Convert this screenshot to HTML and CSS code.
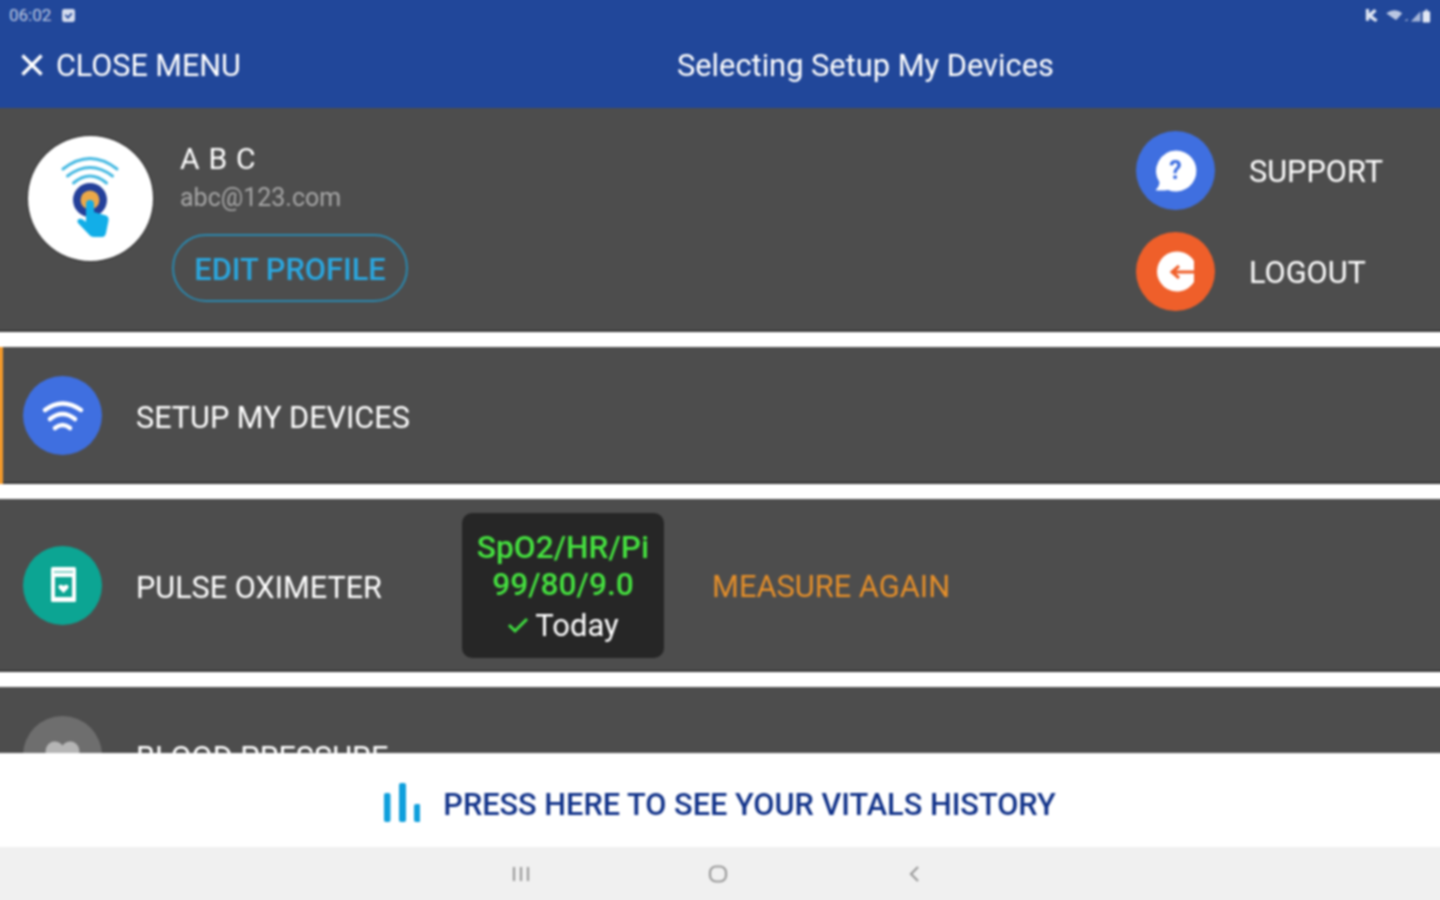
FILE: index.html
```html
<!DOCTYPE html>
<html lang="en">
<head>
<meta charset="utf-8">
<title>Selecting Setup My Devices</title>
<link rel="stylesheet" href="styles.css">
</head>
<body>
<div class="screen">
  <header class="appbar">
    <div class="status">
      <div class="status-left">
        <span class="time">06:02</span>
        <svg class="st-icon" width="15" height="15" viewBox="0 0 14 14"><rect x="1" y="1" width="12" height="12" rx="2" fill="#d4dcee"/><path d="M4 6.500l2.500 2.500L10 5" fill="none" stroke="#21479a" stroke-width="1.600"/></svg>
      </div>
      <svg class="st-right" width="68" height="15" viewBox="0 0 62 14">
        <path d="M1 1h3v4l5-4 2 2-4 4 5 4-2 2-6-4v3H1z" fill="#dde4f2"/>
        <path d="M20 5q8-6 15 0l-5 5.500q-1 1-2 0z" fill="#b9c6e2"/>
        <path d="M37 12l3-2v2z" fill="#b9c6e2"/>
        <path d="M43 12.500L52 3v9.500z" fill="#a5b5d8"/>
        <path d="M55 3h1.500V1.500h2V3H60a1 1 0 0 1 1 1v8.500a1 1 0 0 1-1 1h-5a1 1 0 0 1-1-1V4a1 1 0 0 1 1-1z" fill="#e2e8f4"/>
      </svg>
    </div>
    <div class="titlebar">
      <div class="close">
        <svg class="close-x" width="24" height="24" viewBox="0 0 24 24"><path d="M2.500 2.500l19 19M21.500 2.500l-19 19" stroke="#fff" stroke-width="3.400" fill="none"/></svg>
        <span>CLOSE MENU</span>
      </div>
      <div class="title">Selecting Setup My Devices</div>
    </div>
  </header>

  <main class="menu">
    <section class="profile">
      <div class="avatar">
        <svg width="125" height="125" viewBox="0 0 125 125">
          <g fill="none" stroke="#45b9e2" stroke-width="3" stroke-linecap="round">
            <path d="M35 33Q62 12 89 33"/>
            <path d="M39.500 40Q62 23 84.500 40"/>
            <path d="M45.500 47Q62 33 78.500 47"/>
          </g>
          <circle cx="62" cy="64" r="17" fill="#24409a"/>
          <circle cx="62" cy="64" r="9.500" fill="#eba848"/>
          <path d="M58 68a4 4 0 0 1 8 0v8l12 3.500q3 1 2.500 5L78 97q-.8 4-4 4h-8q-3.500 0-5.500-3L50 87q-1.500-3 1-4t7 3z" fill="#12aee8"/>
        </svg>
      </div>
      <div class="identity">
        <div class="name">A B C</div>
        <div class="email">abc@123.com</div>
        <div class="edit"><span class="edit-text">EDIT PROFILE</span></div>
      </div>
      <div class="actions">
        <div class="action">
          <svg class="disc" width="79" height="79" viewBox="0 0 79 79">
            <circle cx="39.500" cy="39.500" r="39.500" fill="#3f6fe0"/>
            <path d="M40 19.500a20.500 20.500 0 1 1-8 39.400c-4 .8-8 .8-12.500.3 2.500-2.500 3.800-5 4-8A20.500 20.500 0 0 1 40 19.500z" fill="#fff"/>
            <text class="qmark" x="39.500" y="48" text-anchor="middle">?</text>
          </svg>
          <span class="action-label">SUPPORT</span>
        </div>
        <div class="action">
          <svg class="disc" width="79" height="79" viewBox="0 0 79 79">
            <circle cx="39.500" cy="39.500" r="39.500" fill="#ef5f2a"/>
            <path d="M58 29a20 20 0 1 0 0 21z" fill="#fff"/>
            <path d="M59 40H36M43 34l-7 6 7 6" fill="none" stroke="#ef5f2a" stroke-width="3"/>
          </svg>
          <span class="action-label">LOGOUT</span>
        </div>
      </div>
    </section>

    <section class="row row-active">
      <svg class="disc" width="79" height="79" viewBox="0 0 79 79">
        <circle cx="39.500" cy="39.500" r="39.500" fill="#3f6fe0"/>
        <g fill="none" stroke="#fff" stroke-width="4.500" stroke-linecap="round">
          <path d="M22 34Q39.500 21 58 34"/>
          <path d="M27 43Q39.500 33 52 43"/>
          <path d="M32 52Q39.500 46 47 52"/>
        </g>
      </svg>
      <span class="row-label">SETUP MY DEVICES</span>
    </section>

    <section class="row row-tall">
      <svg class="disc" width="79" height="79" viewBox="0 0 79 79">
        <circle cx="39.500" cy="39.500" r="39.500" fill="#0ca593"/>
        <rect x="28" y="21" width="25" height="35" rx="1.500" fill="#fff"/>
        <rect x="32" y="31" width="17" height="20" fill="#0ca593"/>
        <path d="M31 26h19" stroke="#0ca593" stroke-width="1"/>
        <path d="M40.500 47l-4.500-4.500q-1.500-2 .3-3.500 2-1 4.200 1 2.200-2 4.200-1 1.800 1.500.3 3.500z" fill="#fff"/>
      </svg>
      <span class="row-label oxi-label">PULSE OXIMETER</span>
      <div class="reading">
        <div class="reading-line">SpO2/HR/Pi</div>
        <div class="reading-line">99/80/9.0</div>
        <div class="reading-date">
          <svg class="tick" width="22" height="18" viewBox="0 0 22 18"><path d="M2 9l6 6L20 3" fill="none" stroke="#3fdc3f" stroke-width="3"/></svg>
          <span class="today">Today</span>
        </div>
      </div>
      <span class="again">MEASURE AGAIN</span>
    </section>

    <section class="row">
      <svg class="disc" width="79" height="79" viewBox="0 0 79 79">
        <circle cx="39.500" cy="39.500" r="39.500" fill="#6e6e6e"/>
        <path d="M39.500 58L25 42q-4-5-1.500-11 3-6 9-5.500 4.500.5 7 4 2.500-3.500 7-4 6-.5 9 5.500 2.500 6-1.500 11z" fill="#b5b5b5"/>
      </svg>
      <span class="row-label">BLOOD PRESSURE</span>
    </section>
  </main>

  <div class="history">
    <svg width="36" height="39" viewBox="0 0 36 39">
      <rect x="0" y="10" width="6.500" height="29" rx="2" fill="#0f9fdc"/>
      <rect x="15" y="0" width="7" height="39" rx="2" fill="#0f9fdc"/>
      <rect x="30" y="21" width="6.500" height="18" rx="2" fill="#0f9fdc"/>
    </svg>
    <span class="history-text">PRESS HERE TO SEE YOUR VITALS HISTORY</span>
  </div>

  <nav class="sysnav">
    <svg width="20" height="18" viewBox="0 0 20 18"><path d="M3 2v14M10 2v14M17 2v14" stroke="#9a9a9a" stroke-width="2.200" fill="none"/></svg>
    <svg width="20" height="18" viewBox="0 0 20 18"><rect x="2" y="1.500" width="16" height="15" rx="6" fill="none" stroke="#9a9a9a" stroke-width="2.200"/></svg>
    <svg width="20" height="18" viewBox="0 0 20 18"><path d="M13 2L6 9l7 7" stroke="#9a9a9a" stroke-width="2.200" fill="none"/></svg>
  </nav>
</div>
</body>
</html>
```

FILE: styles.css
```css
* { box-sizing: border-box; }
html, body { margin: 0; height: 100%; }
body { background: #fff; font-family: Roboto, "Liberation Sans", sans-serif; overflow: hidden; }
/* The page bleeds 4px past the window so the soft focus has no pale fringe at the edges. */
.screen { width: 1448px; height: 908px; margin: -4px; display: flex; flex-direction: column; filter: blur(0.8px); }

.appbar { height: 112px; padding-top: 4px; background: #21479a; flex: none; color: #fff; }
.status { height: 30px; display: flex; justify-content: space-between; align-items: center; padding: 0 12px 0 13px; }
.status-left { display: flex; align-items: center; gap: 10px; }
.time { font-size: 17px; color: #bcc8e2; }
.titlebar { display: grid; grid-template-columns: 681px auto; align-items: center; height: 70px; }
.close { display: flex; align-items: center; gap: 12px; padding-left: 24px; font-size: 30.500px; }
.close-x { flex: none; }
.title { font-size: 30.800px; }

.menu { flex: 1; min-height: 0; overflow: hidden; display: flex; flex-direction: column; gap: 15px; }
.profile { height: 224px; flex: none; background: #4d4d4d; box-shadow: inset 0 -2px 0 #383838; display: flex; align-items: flex-start; padding: 23px 4px 0 32px; color: #fff; }
.avatar { width: 125px; height: 125px; border-radius: 50%; background: #fff; margin-top: 5px; box-shadow: 0 0 1px 1px #363636; flex: none; }
.identity { margin-left: 19px; display: flex; flex-direction: column; align-items: flex-start; }
.name { font-size: 30px; line-height: 36px; margin: 10px 0 0 8px; letter-spacing: .7px; color: #fff; }
.email { font-size: 25px; line-height: 30px; margin: 6px 0 0 8px; color: #a6a6a6; }
.edit { width: 236px; height: 68px; margin-top: 21px; border: 2px solid #2a88ae; border-radius: 34px; display: flex; align-items: center; justify-content: center; color: #2ba6de; font-size: 30.800px; font-weight: 500; }
.edit-text { padding-top: 2px; }
.actions { margin-left: auto; width: 304px; display: flex; flex-direction: column; gap: 22px; }
.action { display: flex; align-items: center; gap: 34px; }
.action-label { font-size: 30.700px; color: #fff; padding-top: 2px; }
.disc { flex: none; display: block; }
.qmark { font-family: Roboto, sans-serif; font-size: 25px; font-weight: 700; fill: #3f6fe0; }

.row { height: 137px; flex: none; background: #4d4d4d; box-shadow: inset 0 -2px 0 #383838; display: flex; align-items: center; padding-left: 27px; color: #fff; }
.row-active { box-shadow: inset 7px 0 0 #f3992b, inset 0 -2px 0 #383838; }
.row-tall { height: 173px; }
.row-label { font-size: 30.600px; margin-left: 34px; padding-top: 3px; }
.oxi-label { width: 326px; flex: none; }
.reading { width: 202px; height: 145px; flex: none; background: #262626; border-radius: 10px; display: flex; flex-direction: column; align-items: center; padding-top: 16px; color: #45e03f; font-size: 31.700px; font-weight: 500; }
.reading-line { line-height: 37px; }
.reading-date { display: flex; align-items: center; gap: 6px; color: #fff; font-size: 31px; font-weight: 400; line-height: 42px; }
.today { padding-top: 2px; }
.again { margin-left: 48px; color: #e38e2a; font-size: 30.800px; padding-top: 2px; }

.history { height: 94px; flex: none; background: #fff; display: flex; align-items: center; justify-content: center; gap: 23px; padding-top: 4px; color: #12338a; font-size: 30.700px; font-weight: 500; }
.history-text { margin-top: 4px; }
.sysnav { height: 57px; padding-bottom: 4px; flex: none; background: #f0f0f0; display: flex; align-items: center; justify-content: center; gap: 177px; padding-right: 4px; }
```
